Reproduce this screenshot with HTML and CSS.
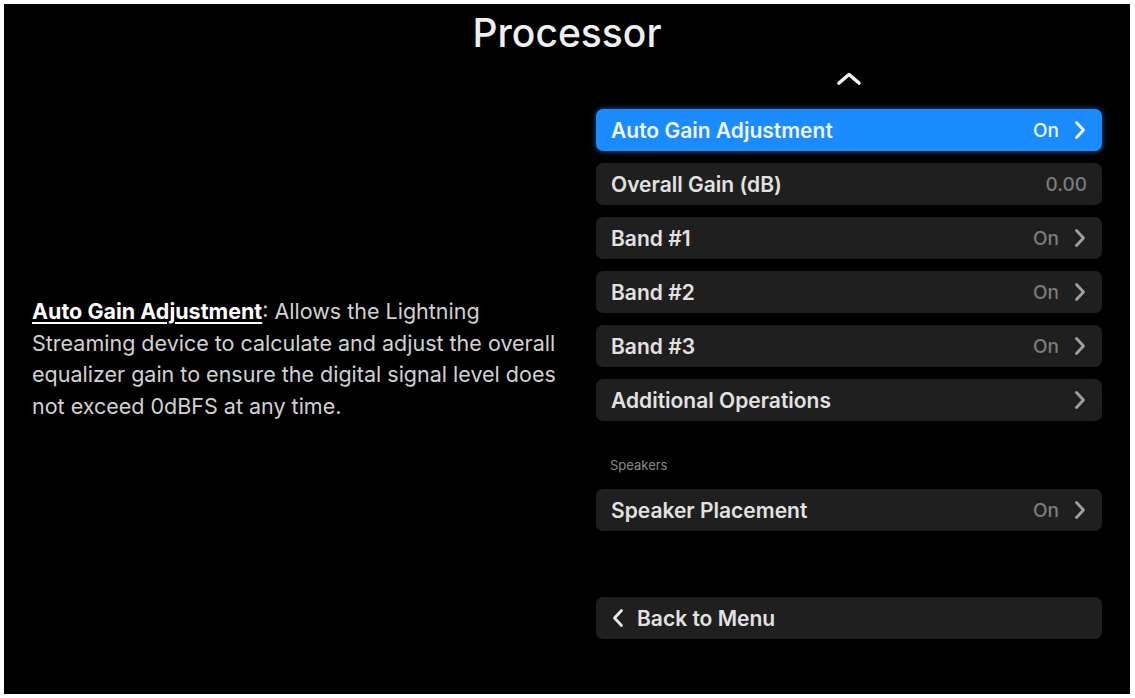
FILE: index.html
```html
<!DOCTYPE html>
<html lang="en">
<head>
<meta charset="utf-8">
<title>Processor</title>
<link rel="stylesheet" href="styles.css">
</head>
<body>
<div class="screen">
  <h1 class="title">Processor</h1>
  <div class="main">
    <div class="desc">
      <p><span class="desc-term">Auto Gain Adjustment</span>: Allows the Lightning Streaming device to calculate and adjust the overall equalizer gain to ensure the digital signal level does not exceed 0dBFS at any time.</p>
    </div>
    <div class="menu">
      <div class="caret-up">
        <svg width="26" height="15" viewBox="0 0 26 15"><path d="M3 12 L13 3.5 L23 12" fill="none" stroke="#f2f2f2" stroke-width="3.6" stroke-linecap="round" stroke-linejoin="round"/></svg>
      </div>
      <ul class="list">
        <li class="row row-active"><span class="row-label">Auto Gain Adjustment</span><span class="row-value">On</span><svg class="chev" width="14" height="20" viewBox="0 0 14 20"><path d="M3.5 2.5 L10.5 10 L3.5 17.5" fill="none" stroke="currentColor" stroke-width="2.8" stroke-linecap="round" stroke-linejoin="round"/></svg></li>
        <li class="row"><span class="row-label">Overall Gain (dB)</span><span class="row-value">0.00</span></li>
        <li class="row"><span class="row-label">Band #1</span><span class="row-value">On</span><svg class="chev" width="14" height="20" viewBox="0 0 14 20"><path d="M3.5 2.5 L10.5 10 L3.5 17.5" fill="none" stroke="currentColor" stroke-width="2.8" stroke-linecap="round" stroke-linejoin="round"/></svg></li>
        <li class="row"><span class="row-label">Band #2</span><span class="row-value">On</span><svg class="chev" width="14" height="20" viewBox="0 0 14 20"><path d="M3.5 2.5 L10.5 10 L3.5 17.5" fill="none" stroke="currentColor" stroke-width="2.8" stroke-linecap="round" stroke-linejoin="round"/></svg></li>
        <li class="row"><span class="row-label">Band #3</span><span class="row-value">On</span><svg class="chev" width="14" height="20" viewBox="0 0 14 20"><path d="M3.5 2.5 L10.5 10 L3.5 17.5" fill="none" stroke="currentColor" stroke-width="2.8" stroke-linecap="round" stroke-linejoin="round"/></svg></li>
        <li class="row"><span class="row-label">Additional Operations</span><svg class="chev" width="14" height="20" viewBox="0 0 14 20"><path d="M3.5 2.5 L10.5 10 L3.5 17.5" fill="none" stroke="currentColor" stroke-width="2.8" stroke-linecap="round" stroke-linejoin="round"/></svg></li>
      </ul>
      <div class="section-label">Speakers</div>
      <ul class="list">
        <li class="row"><span class="row-label">Speaker Placement</span><span class="row-value">On</span><svg class="chev" width="14" height="20" viewBox="0 0 14 20"><path d="M3.5 2.5 L10.5 10 L3.5 17.5" fill="none" stroke="currentColor" stroke-width="2.8" stroke-linecap="round" stroke-linejoin="round"/></svg></li>
      </ul>
      <div class="row row-back"><svg class="chev-back" width="14" height="20" viewBox="0 0 14 20"><path d="M10.5 2.5 L3.5 10 L10.5 17.5" fill="none" stroke="currentColor" stroke-width="2.8" stroke-linecap="round" stroke-linejoin="round"/></svg><span class="row-label">Back to Menu</span></div>
    </div>
  </div>
</div>
</body>
</html>
```

FILE: styles.css
```css
* { box-sizing: border-box; }

html, body {
  margin: 0;
  padding: 0;
  background: #ffffff;
}

body {
  padding: 4px 5px 4px 4px;
  font-family: Inter, "Liberation Sans", sans-serif;
}

.screen {
  width: 1126px;
  height: 690px;
  background: #000000;
  padding: 6px 28px 0 28px;
  display: flex;
  flex-direction: column;
}

.title {
  margin: 0;
  text-align: center;
  font-size: 39px;
  line-height: 46px;
  font-weight: 500;
  color: #efefef;
}

.main {
  display: flex;
  gap: 26px;
  flex: 1;
}

.desc {
  flex: 1;
  padding-top: 240px;
}

.desc p {
  margin: 0;
  font-size: 21.5px;
  line-height: 31.5px;
  color: #d2d2d2;
}

.desc-term {
  color: #ffffff;
  font-weight: 700;
  text-decoration: underline;
  text-underline-offset: 3px;
}

.menu {
  width: 506px;
  padding-top: 15px;
  display: flex;
  flex-direction: column;
}

.caret-up {
  display: flex;
  justify-content: center;
  height: 15px;
  margin-bottom: 23px;
}

.list {
  list-style: none;
  margin: 0;
  padding: 0;
  display: flex;
  flex-direction: column;
  gap: 12px;
}

.row {
  height: 42px;
  border-radius: 7px;
  background: #1f1f1f;
  display: flex;
  align-items: center;
  padding: 0 15px 0 15px;
  gap: 14px;
  color: #e6e6e6;
}

.row-label {
  flex: 1;
  font-size: 21px;
  font-weight: 600;
  color: #e2e2e2;
}

.row-value {
  font-size: 19px;
  font-weight: 500;
  color: #7c7c7c;
}

.chev {
  color: #a0a0a0;
  flex: none;
}

.row-active {
  background: #1a8cff;
  box-shadow: 0 0 6px rgba(30, 140, 255, 0.6);
}

.row-active .row-label,
.row-active .row-value,
.row-active .chev {
  color: #f2f6ff;
}

.section-label {
  margin: 36px 0 16px 14px;
  height: 16px;
  line-height: 16px;
  font-size: 13px;
  color: #8a8a8a;
}

.row-back {
  margin-top: 66px;
  gap: 12px;
}

.chev-back {
  color: #e8e8e8;
  flex: none;
}
```
